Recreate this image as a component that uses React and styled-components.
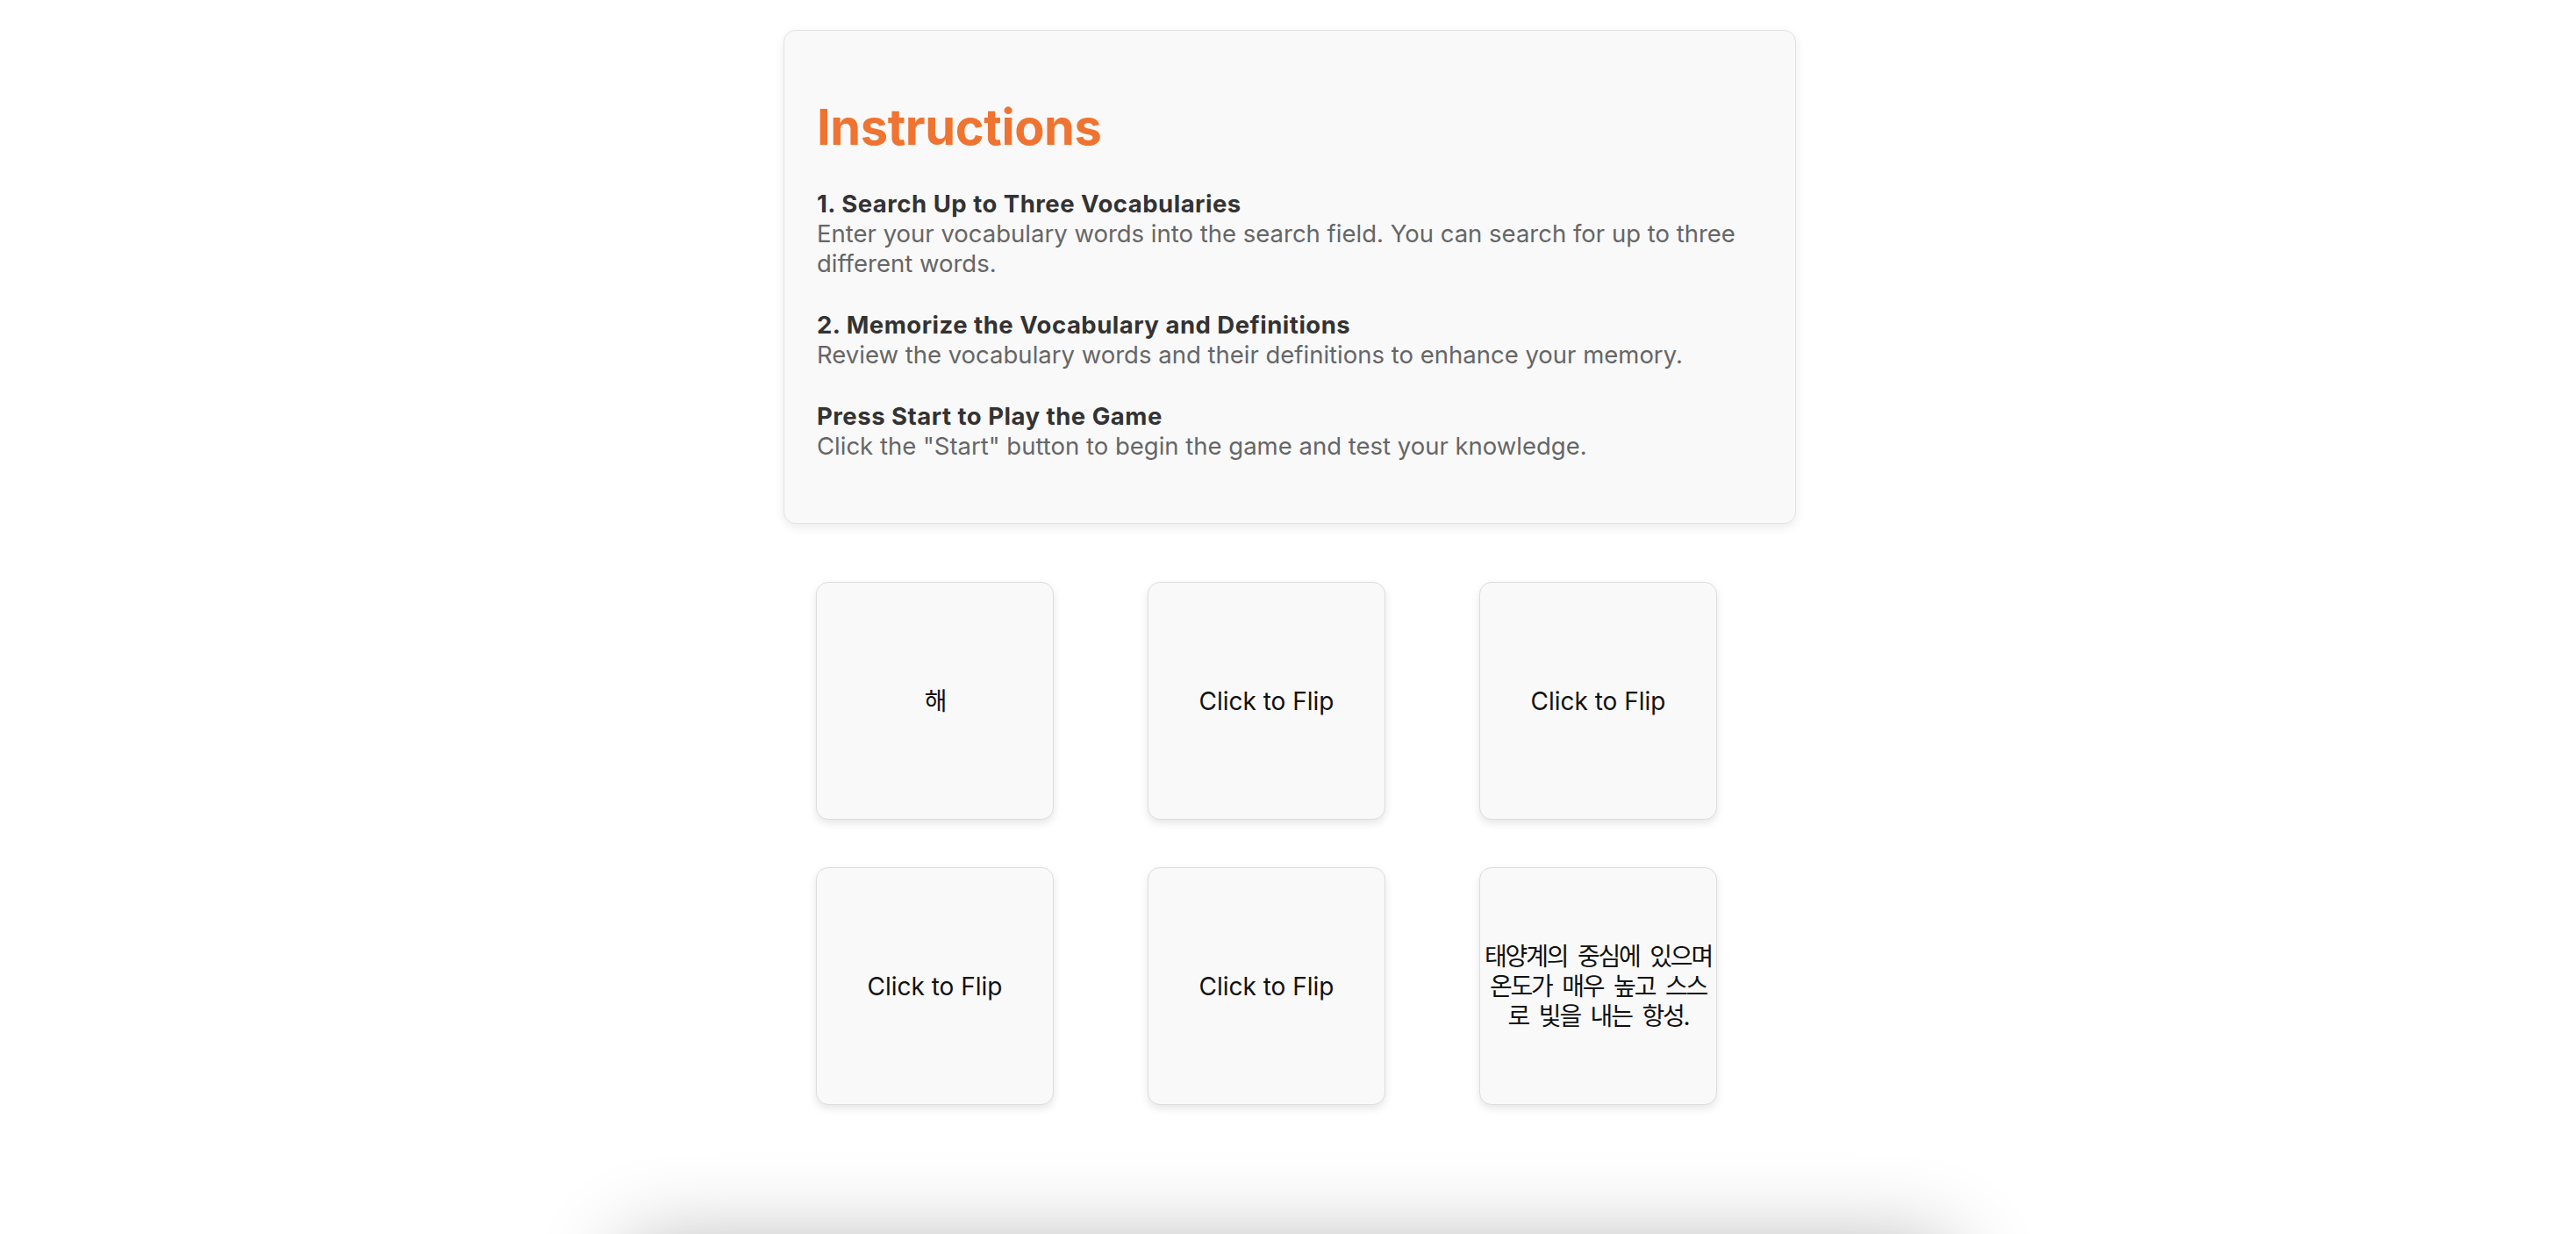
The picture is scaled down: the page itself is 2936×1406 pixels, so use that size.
import React from "react";
import styled, { createGlobalStyle } from "styled-components";

const GlobalStyle = createGlobalStyle`
  html, body {
    margin: 0;
    padding: 0;
    background: #ffffff;
    font-family: Inter, "Noto Sans", "Noto Sans CJK KR", sans-serif;
  }
  * {
    box-sizing: border-box;
  }
`;

const steps = [
  {
    title: "1. Search Up to Three Vocabularies",
    text: "Enter your vocabulary words into the search field. You can search for up to three different words.",
  },
  {
    title: "2. Memorize the Vocabulary and Definitions",
    text: "Review the vocabulary words and their definitions to enhance your memory.",
  },
  {
    title: "Press Start to Play the Game",
    text: 'Click the "Start" button to begin the game and test your knowledge.',
  },
];

const cards = [
  { text: "해", korean: true },
  { text: "Click to Flip" },
  { text: "Click to Flip" },
  { text: "Click to Flip" },
  { text: "Click to Flip" },
  { text: "태양계의 중심에 있으며 온도가 매우 높고 스스로 빛을 내는 항성.", korean: true },
];

function App() {
  return (
    <Page>
      <GlobalStyle />
      <Column>
        <Panel>
          <Title>Instructions</Title>
          {steps.map((s) => (
            <Step key={s.title}>
              <StepTitle>{s.title}</StepTitle>
              <StepText>{s.text}</StepText>
            </Step>
          ))}
        </Panel>
        <Board>
          {cards.map((c, i) => (
            <Card key={i} $korean={c.korean}>
              {c.text}
            </Card>
          ))}
        </Board>
      </Column>
      <Dock />
    </Page>
  );
}

const Page = styled.div`
  height: 100vh;
  overflow: hidden;
  padding-top: 34px;
  display: flex;
  flex-direction: column;
  align-items: center;
`;

const Column = styled.div`
  width: 1154px;
  margin-left: 4px;
`;

const Panel = styled.section`
  background-color: #f9f9f9;
  border: 1px solid #e2e2e2;
  border-radius: 14px;
  padding: 37px;
  box-shadow: 0 4px 12px rgba(0, 0, 0, 0.08);
`;

const Title = styled.h2`
  margin: 40px 0 36px;
  font-size: 56px;
  line-height: 67px;
  font-weight: 700;
  color: #ef7331;
  letter-spacing: -0.4px;
`;

const Step = styled.div`
  margin-bottom: 36px;

  &:last-child {
    margin-bottom: 34px;
  }
`;

const StepTitle = styled.h3`
  margin: 0;
  font-size: 27.5px;
  line-height: 34px;
  font-weight: 700;
  letter-spacing: 0.5px;
  color: #333333;
`;

const StepText = styled.p`
  margin: 0;
  font-size: 27.5px;
  line-height: 34px;
  font-weight: 400;
  color: #666666;
`;

const Board = styled.div`
  margin-top: 66px;
  padding: 0 37px;
  display: grid;
  grid-template-columns: repeat(3, 1fr);
  gap: 54px;
  justify-items: start;
`;

const Card = styled.div`
  width: 271px;
  height: 271px;
  display: flex;
  align-items: center;
  justify-content: center;
  text-align: center;
  background-color: #f9f9f9;
  border: 1px solid #dddddd;
  border-radius: 14px;
  box-shadow: 0 4px 10px rgba(0, 0, 0, 0.1);
  font-family: Inter, "Noto Sans CJK KR", sans-serif;
  font-size: 28px;
  line-height: 34px;
  letter-spacing: ${(p) => (p.$korean ? "-2.2px" : "0")};
  word-spacing: ${(p) => (p.$korean ? "6px" : "0")};
  color: #111111;
  cursor: pointer;
`;

const Dock = styled.div`
  flex-shrink: 0;
  margin-top: 160px;
  width: 1520px;
  height: 200px;
  border-radius: 40px;
  background: #ffffff;
  box-shadow: 0 0 100px rgba(0, 0, 0, 0.3);
`;

export default App;
